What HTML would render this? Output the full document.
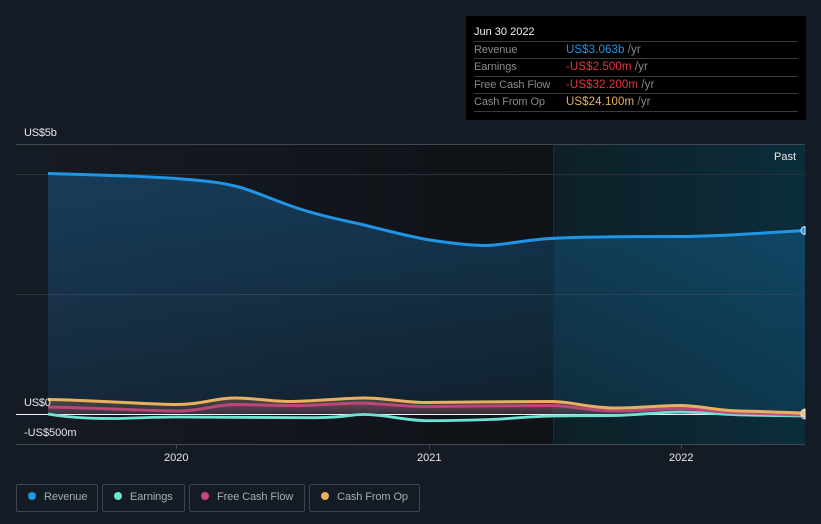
<!DOCTYPE html>
<html>
<head>
<meta charset="utf-8">
<style>
html,body{margin:0;padding:0;background:#151b24;}
body{width:821px;height:524px;overflow:hidden;position:relative;font-family:"Liberation Sans",sans-serif;}
svg{position:absolute;left:0;top:0;}
.tip{position:absolute;left:466px;top:16px;width:340px;height:104px;background:#000;}
.t{position:absolute;font-size:11px;line-height:14px;white-space:nowrap;color:#8a8a8a;letter-spacing:-.1px;}
.v{position:absolute;font-size:11.5px;line-height:14px;white-space:nowrap;color:#8a8a8a;letter-spacing:.1px;}
.rule{position:absolute;left:474px;width:324px;height:1px;background:#3a3a3a;}
.ax{position:absolute;font-size:11px;line-height:14px;color:#e8e8e8;white-space:nowrap;}
.lg{position:absolute;top:484px;height:26px;border:1px solid #3e434d;border-radius:2px;box-sizing:content-box;}
.dot{position:absolute;width:8px;height:8px;border-radius:50%;top:492px;}
.lt{position:absolute;top:490px;font-size:11px;line-height:14px;color:#a9adb3;white-space:nowrap;letter-spacing:-.1px;}
</style>
</head>
<body>
<svg width="821" height="524" viewBox="0 0 821 524">
<defs>
<linearGradient id="past" x1="0" x2="1" y1="0" y2="0">
<stop offset="0" stop-color="#0d2027"/><stop offset="1" stop-color="#0b2d3b"/>
</linearGradient>
<linearGradient id="dark" x1="0" x2="1" y1="0" y2="0">
<stop offset="0" stop-color="#151a23"/><stop offset="1" stop-color="#0f1216"/>
</linearGradient>
<linearGradient id="rev" x1="0" x2="0" y1="173" y2="415" gradientUnits="userSpaceOnUse">
<stop offset="0" stop-color="#1f96e6" stop-opacity=".28"/><stop offset="1" stop-color="#1f96e6" stop-opacity=".11"/>
</linearGradient>
<linearGradient id="cf" x1="0" x2="0" y1="398" y2="415" gradientUnits="userSpaceOnUse">
<stop offset="0" stop-color="#e8b060" stop-opacity=".25"/><stop offset="1" stop-color="#e8b060" stop-opacity=".05"/>
</linearGradient>
<linearGradient id="fc" x1="0" x2="0" y1="403" y2="415" gradientUnits="userSpaceOnUse">
<stop offset="0" stop-color="#c4487f" stop-opacity=".35"/><stop offset="1" stop-color="#c4487f" stop-opacity=".08"/>
</linearGradient>
</defs>
<rect x="48" y="144" width="505" height="300" fill="url(#dark)"/>
<rect x="553" y="144" width="252" height="300" fill="url(#past)"/>
<rect x="16" y="144" width="789" height="1" fill="#43474f"/>
<rect x="16" y="174" width="789" height="1" fill="#2c3038"/>
<rect x="16" y="294" width="789" height="1" fill="#2c3038"/>
<rect x="16" y="444" width="789" height="1" fill="#43474f"/>
<rect x="176" y="444" width="1" height="5" fill="#43474f"/>
<rect x="429" y="444" width="1" height="5" fill="#43474f"/>
<rect x="681" y="444" width="1" height="5" fill="#43474f"/>
<path fill="url(#rev)" d="M48 173.5C80 174.5 140 175.8 176 178.5S222 183 237 186.5S275 201 300 209S345 220.5 360 224S410 237 430 240S470 245.5 485 245.5S525 240 550 238.5S640 236.5 680 236.5S770 232.5 805 230.5L805 414.5L48 414.5Z"/>
<rect x="553" y="144" width="1" height="300" fill="#182f38"/>
<path fill="url(#cf)" d="M48 399.5C90 400 150 404.5 176 404.5S215 398 235 398S270 401.5 290 401.5S345 398 365 398S405 402.5 425 402.5S535 401.3 553 401.5S590 408 615 408S660 405.5 680 405.5S715 410.5 740 411S790 412.7 805 413L805 414.5L48 414.5Z"/>
<path fill="url(#fc)" d="M48 407C90 407.5 150 411 176 411S215 404.5 235 404.5S280 405.8 300 405.5S345 403 360 403S405 406.5 425 406.5S535 405.3 553 405.5S590 411 615 411S660 408.5 680 408.5S715 412.5 740 413S790 414.7 805 415L805 414.5L48 414.5Z"/>
<rect x="16" y="414" width="789" height="1" fill="#f2f2f2"/>
<path fill="none" stroke="#6fe3d3" stroke-width="2.8" d="M48 414C65 417 85 418.5 110 418.5S150 417 176 417S270 417.7 310 417.7S345 414.5 365 414.5S405 420.7 428 420.7S470 420.2 490 419.5S530 416.3 553 416S600 415.8 620 415.3S660 412 680 412S720 414.3 745 415S790 415.7 805 416"/>
<path fill="none" stroke="#c4487f" stroke-opacity=".92" stroke-width="3" d="M48 407C90 407.5 150 411 176 411S215 404.5 235 404.5S280 405.8 300 405.5S345 403 360 403S405 406.5 425 406.5S535 405.3 553 405.5S590 411 615 411S660 408.5 680 408.5S715 412.5 740 413S790 414.7 805 415"/>
<path fill="none" stroke="#e8b060" stroke-width="3" d="M48 399.5C90 400 150 404.5 176 404.5S215 398 235 398S270 401.5 290 401.5S345 398 365 398S405 402.5 425 402.5S535 401.3 553 401.5S590 408 615 408S660 405.5 680 405.5S715 410.5 740 411S790 412.7 805 413"/>
<path fill="none" stroke="#2095e6" stroke-width="3" d="M48 173.5C80 174.5 140 175.8 176 178.5S222 183 237 186.5S275 201 300 209S345 220.5 360 224S410 237 430 240S470 245.5 485 245.5S525 240 550 238.5S640 236.5 680 236.5S770 232.5 805 230.5"/>
<rect x="805" y="140" width="16" height="320" fill="#151b24"/>
<path d="M805 226.5a4 4 0 0 0 0 8z" fill="#2095e6" stroke="#d8e8f2" stroke-width="1"/>
<path d="M805 411a4 4 0 0 0 0 8z" fill="#c4487f" stroke="#e6d8ee" stroke-width="1"/>
<path d="M805 409a4 4 0 0 0 0 8z" fill="#e8c070" stroke="#eee8d8" stroke-width="1"/>
</svg>

<div class="tip"></div>
<div class="t" style="left:474px;top:25px;color:#f2f2f2;letter-spacing:0;">Jun 30 2022</div>
<div class="rule" style="top:41px"></div>
<div class="t" style="left:474px;top:43px;">Revenue</div>
<div class="v" style="left:566px;top:43px;"><span style="color:#2095e6">US$3.063b</span> /yr</div>
<div class="rule" style="top:58px"></div>
<div class="t" style="left:474px;top:60px;">Earnings</div>
<div class="v" style="left:566px;top:60px;"><span style="color:#e8353c">-US$2.500m</span> /yr</div>
<div class="rule" style="top:76px"></div>
<div class="t" style="left:474px;top:78px;">Free Cash Flow</div>
<div class="v" style="left:566px;top:78px;"><span style="color:#e8353c">-US$32.200m</span> /yr</div>
<div class="rule" style="top:93px"></div>
<div class="t" style="left:474px;top:95px;">Cash From Op</div>
<div class="v" style="left:566px;top:95px;"><span style="color:#e8b060">US$24.100m</span> /yr</div>
<div class="rule" style="top:111px"></div>

<div class="ax" style="left:24px;top:126px;letter-spacing:-.2px;">US$5b</div>
<div class="ax" style="left:24px;top:396px;letter-spacing:-.2px;">US$0</div>
<div class="ax" style="left:24px;top:426px;">-US$500m</div>
<div class="ax" style="left:774px;top:150px;">Past</div>
<div class="ax" style="left:164px;top:451px;">2020</div>
<div class="ax" style="left:417px;top:451px;">2021</div>
<div class="ax" style="left:669px;top:451px;">2022</div>

<div class="lg" style="left:16px;width:80px;"></div>
<div class="dot" style="left:28px;background:#2095e6;"></div>
<div class="lt" style="left:44px;">Revenue</div>
<div class="lg" style="left:102px;width:81px;"></div>
<div class="dot" style="left:114px;background:#6fe3d3;"></div>
<div class="lt" style="left:130px;">Earnings</div>
<div class="lg" style="left:189px;width:114px;"></div>
<div class="dot" style="left:201px;background:#c4487f;"></div>
<div class="lt" style="left:217px;">Free Cash Flow</div>
<div class="lg" style="left:309px;width:109px;"></div>
<div class="dot" style="left:321px;background:#e8b060;"></div>
<div class="lt" style="left:337px;">Cash From Op</div>
</body>
</html>
